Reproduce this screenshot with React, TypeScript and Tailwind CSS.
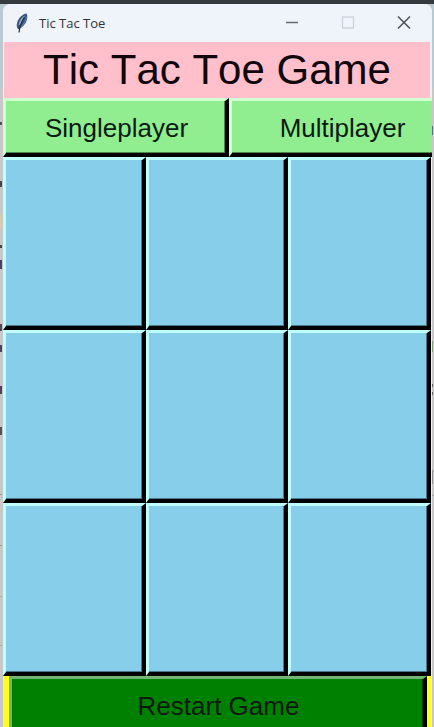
import { useState } from "react";

const raised =
  "border-t-3 border-l-3 border-r-4 border-b-4 border-r-black border-b-black pt-0.5 pl-0.5 text-[26px] leading-8 text-[#0c1a10] cursor-pointer";

const green =
  " w-[226px] shrink-0 border-t-[#d0ffd0] border-l-[#d0ffd0] bg-[#90ee90] shadow-[inset_-1px_-1px_0_#4f8450]";

function Feather() {
  return (
    <svg viewBox="0 0 14 20" className="h-5 w-3.5" aria-hidden="true">
      <path d="M11.500.6C7.500 1.200 3.500 5 2.200 9.500c-.8 2.800-.5 5 .8 6.800 3.500-1 7-4.300 8.500-8.300 1-2.700 1.200-5.200 0-7.400Z" fill="#35557f" />
      <path d="M10 2.400C6.500 4.200 4 8 3.500 12.800 6 10.400 8.600 7 10 2.400Z" fill="#8fb0d6" />
      <path d="M11.300 3.500C11 8 8.500 12 5 14.600" fill="none" stroke="#5f86b3" strokeWidth="1" />
      <path d="M9.500 4C6.500 8.500 4.600 13 4 19.500" fill="none" stroke="#20252e" strokeWidth="1.200" />
    </svg>
  );
}

function TitleBar() {
  const control = "flex h-9 w-14 items-center justify-center";
  return (
    <header className="flex h-[38px] items-center bg-[#eff3fa] pl-3">
      <Feather />
      <span className="ml-2.5 flex-1 whitespace-nowrap font-['Open_Sans','Noto_Sans',sans-serif] text-[13px] leading-5 text-[#333]">
        Tic Tac Toe
      </span>
      <button aria-label="Minimize" className={control}>
        <svg viewBox="0 0 14 14" className="size-3.5">
          <path d="M1 6.500h12" stroke="#666970" strokeWidth="1.500" />
        </svg>
      </button>
      <button aria-label="Maximize" className={control} disabled>
        <svg viewBox="0 0 14 14" className="size-3.5">
          <rect x="1.500" y="1" width="11" height="11" fill="none" stroke="#cbced6" strokeWidth="1.200" />
        </svg>
      </button>
      <button aria-label="Close" className={control}>
        <svg viewBox="0 0 14 14" className="size-3.5">
          <path d="M1 .5l12 12M13 .5L1 12.500" stroke="#4e5158" strokeWidth="1.500" />
        </svg>
      </button>
    </header>
  );
}

const leftMarks = [
  [122, 3, "#555"], [181, 6, "#4b4657"], [214, 14, "#d8cba8"], [245, 3, "#444"],
  [260, 9, "#4c4060"], [324, 7, "#4a4a58"], [345, 7, "#4c4458"], [386, 8, "#55405c"],
  [427, 8, "#55505a"], [494, 1, "#999"], [545, 1, "#999"], [596, 1, "#aaa"], [645, 1, "#aaa"],
] as const;

const rightMarks = [
  [126, 9, "#5a7184"], [341, 11, "#86a080"], [384, 3, "#666"], [392, 3, "#666"],
  [470, 14, "#929296"], [495, 1, "#999"],
] as const;

function Edge({ marks, side }: { marks: readonly (readonly [number, number, string])[]; side: string }) {
  return (
    <svg className={"absolute top-0 h-full w-[3px] " + side} aria-hidden="true">
      <rect width="3" height="88" fill="#b9cad3" />
      {marks.map(([y, h, color]) => (
        <rect key={y} y={y} width="2" height={h} fill={color} />
      ))}
    </svg>
  );
}

export default function App() {
  const [cells, setCells] = useState<string[]>(Array(9).fill(""));
  const [single, setSingle] = useState(true);

  const play = (index: number) =>
    setCells((old) => {
      if (old[index]) return old;
      const mark = old.filter(Boolean).length % 2 ? "O" : "X";
      return old.map((cell, i) => (i === index ? mark : cell));
    });

  return (
    <div className="relative h-screen overflow-hidden bg-[#c8c8ca] font-['Liberation_Sans',Arial,sans-serif] [font-kerning:none]">
      <Edge marks={leftMarks} side="left-0" />
      <Edge marks={rightMarks} side="right-0" />
      <div className="relative h-1 bg-[#343a3d]" />
      <div className="relative mr-0.5 ml-[3px] overflow-hidden rounded-t-lg bg-[#eff0f2]">
        <TitleBar />
        <h1 className="mr-0.5 ml-px h-14 bg-[#ffc0cb] text-center text-[42px] leading-[56px] whitespace-nowrap text-[#10060b]">
          Tic Tac Toe Game
        </h1>
        <div className="flex h-[59px] overflow-hidden">
          <button aria-pressed={single} onClick={() => setSingle(true)} className={raised + green}>
            Singleplayer
          </button>
          <button aria-pressed={!single} onClick={() => setSingle(false)} className={raised + green}>
            Multiplayer
          </button>
        </div>
        <main className="mr-px grid grid-cols-3">
          {cells.map((cell, i) => (
            <button
              key={i}
              aria-label={"Cell " + (i + 1)}
              onClick={() => play(i)}
              className={raised + " h-[173px] border-t-[#c0ffff] border-l-[#c0ffff] bg-[#87ceeb] shadow-[inset_-1px_-1px_0_#4d7788]"}
            >
              {cell}
            </button>
          ))}
        </main>
        <footer className="mr-px bg-[#ffff22] pr-1 pl-1.5">
          <button
            onClick={() => setCells(Array(9).fill(""))}
            className={raised + " h-[59px] w-full border-t-[#72b872] border-l-[#72b872] bg-[#008000] shadow-[inset_-1px_-1px_0_#004800]"}
          >
            Restart Game
          </button>
        </footer>
      </div>
    </div>
  );
}
